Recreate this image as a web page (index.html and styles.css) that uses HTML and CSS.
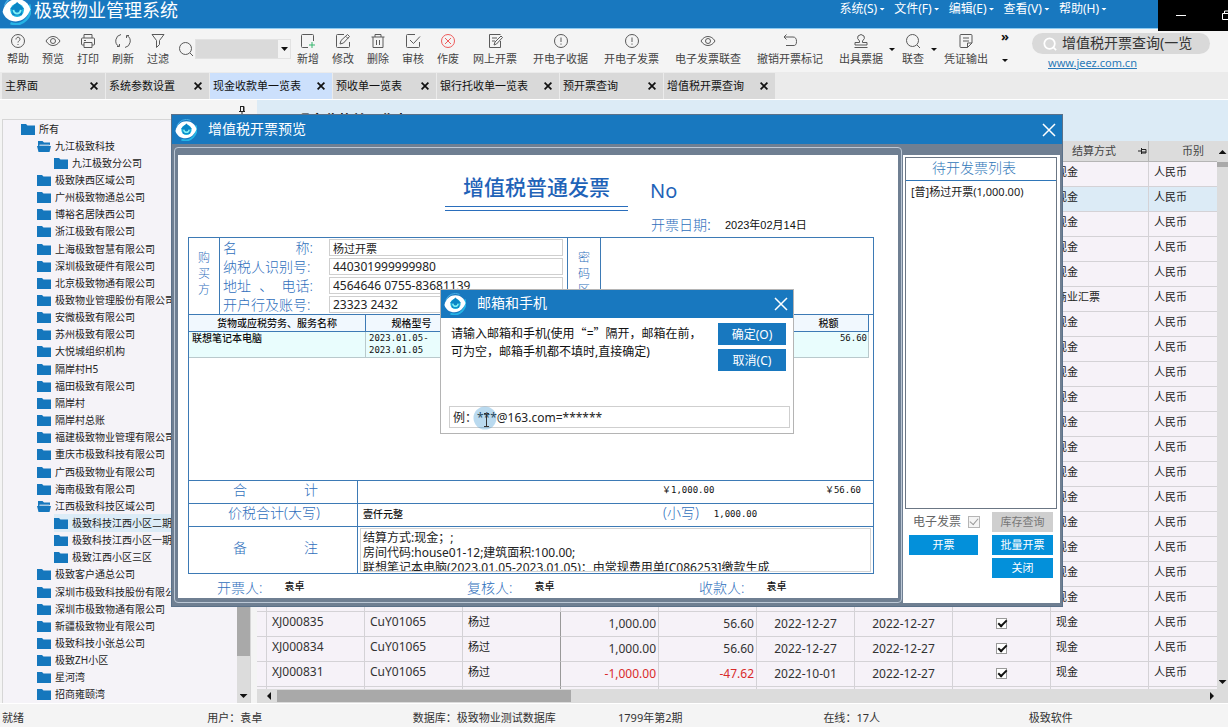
FILE: index.html
```html
<!DOCTYPE html>
<html lang="zh-CN">
<head>
<meta charset="utf-8">
<title>极致物业管理系统</title>
<link rel="stylesheet" href="styles.css">
</head>
<body>
<svg class="defs" aria-hidden="true">
  <symbol id="logo" viewBox="0 0 24 24">
    <path d="M2 8A11 11 0 0 1 17 1.500" fill="none" stroke="#4fb6ea" stroke-width="1"/>
    <path d="M22.500 7A12 12 0 0 1 7 22.500" fill="none" stroke="#25b4e6" stroke-width="2"/>
    <path d="M.5 13C2 6 7 2.500 12.500 2.500c5.500 0 9.500 3.500 11 8.500-2 6-6.500 10-12 10C6 21 2 18 .5 13z" fill="#fff"/>
    <circle cx="12.500" cy="11.800" r="5.600" fill="#19b2de"/>
    <path d="M12.500 5L18.500 11h-2v5h-8v-5h-2z" fill="#0b86c6"/>
    <path d="M9.500 11.500c.5 4 5.500 4 6 0" fill="none" stroke="#7ff0f5" stroke-width="1.500"/>
  </symbol>
  <symbol id="folder" viewBox="0 0 14 12"><path d="M0 1h5l1.500 1.500H14V12H0z" fill="#1577bd"/></symbol>
  <symbol id="folder-open" viewBox="0 0 14 12"><path d="M1 1h4.500L7 2.500h6V5H3L1 10z" fill="#1577bd"/><path d="M2.500 4.500h10V6h-10z" fill="#a9cbe4"/><path d="M0 6h14l-1.500 6H1.500z" fill="#1577bd"/></symbol>
  <symbol id="eye" viewBox="0 0 16 16"><path d="M1 8c3.500-6 10.500-6 14 0-3.500 6-10.500 6-14 0z"/><circle cx="8" cy="8" r="2.500"/></symbol>
  <symbol id="alert" viewBox="0 0 16 16"><circle cx="8" cy="8" r="6.500"/><path d="M8 4.500v4.500M8 10.500v1.200"/></symbol>
  <symbol id="lens" viewBox="0 0 16 16"><circle cx="7.500" cy="7.500" r="6"/><path d="M12 12l3 3"/></symbol>
  <symbol id="x" viewBox="0 0 14 14"><path d="M1 1l12 12M13 1L1 13"/></symbol>
</svg>

<header class="titlebar">
  <svg class="app-logo"><use href="#logo"/></svg>
  <h1>极致物业管理系统</h1>
  <nav class="menu">
    <button>系统(S)</button><button>文件(F)</button><button>编辑(E)</button><button>查看(V)</button><button>帮助(H)</button>
  </nav>
  <div class="win-controls">
    <svg viewBox="0 0 70 30"><path d="M18 15.500h10M64.500 13.500h12v6h-12zM66.500 13v-2h10" fill="none" stroke="#fff"/></svg>
  </div>
</header>

<div class="toolbar">
  <div class="group">
    <button><svg viewBox="0 0 16 16"><circle cx="8" cy="8" r="6.500"/><path d="M6 6.500c0-3 4-3 4-.3C10 7.800 8 8 8 9.500M8 11v1"/></svg>帮助</button>
    <button><svg><use href="#eye"/></svg>预览</button>
    <button><svg viewBox="0 0 16 16"><path d="M4 5V1.500h8V5M4 12H2.500Q1.500 12 1.500 11V6q0-1 1-1h11q1 0 1 1v5q0 1-1 1H12M4 9.500h8v5H4zM4 7.500h2"/></svg>打印</button>
    <button><svg viewBox="0 0 16 16"><path d="M6 1.500A6.500 6.500 0 0 0 4 13.500M2 13.500h2.500V11M10 14.500A6.500 6.500 0 0 0 12 2.500M14 2.500h-2.500V5"/></svg>刷新</button>
    <button><svg viewBox="0 0 16 16"><path d="M2 1.500h12L9.500 7.500v4l-3 3v-7z"/></svg>过滤</button>
  </div>
  <svg class="find"><use href="#lens"/></svg>
  <div class="combo"><select aria-label="查找"><option></option></select></div>
  <div class="group">
    <button><svg viewBox="0 0 16 16"><path d="M8 14.500H2.500q-1 0-1-1v-11q0-1 1-1h10q1 0 1 1V8"/><path d="M12 9v6M9 12h6" stroke="#35b56c"/></svg>新增</button>
    <button><svg viewBox="0 0 16 16"><path d="M9 1.500H2.500q-1 0-1 1v11q0 1 1 1h11q1 0 1-1V9M5 11l1-3.500L12.500 1.500l2 2L8.500 10zM11 3.500l2 2"/></svg>修改</button>
    <button><svg viewBox="0 0 16 16"><path d="M1.500 4h13M5 4V1.500h6V4M3 4v10.500h10V4M6.500 7v5M9.500 7v5"/></svg>删除</button>
    <button><svg viewBox="0 0 16 16"><path d="M10 1.500H2.500q-1 0-1 1v11q0 1 1 1h11q1 0 1-1V9M5 7l3.500 3.500L15 3.500"/></svg>审核</button>
    <button class="danger"><svg viewBox="0 0 16 16"><circle cx="8" cy="8" r="6.500"/><path d="M5 5l6 6M11 5l-6 6"/></svg>作废</button>
  </div>
  <div class="group wide">
    <button><svg viewBox="0 0 16 16"><path d="M13.500 8v6.500H2.500v-13h11M5 5h5M5 8h3M7 12l1-3 6-6 1.500 1.500L9.500 11z"/></svg>网上开票</button>
    <button><svg><use href="#alert"/></svg>开电子收据</button>
    <button><svg><use href="#alert"/></svg>开电子发票</button>
    <button><svg><use href="#eye"/></svg>电子发票联查</button>
    <button><svg viewBox="0 0 16 16"><path d="M4.500 1.500L2 4l2.500 2.500M2 4h9q3.500 0 3.500 4.500T11 12.500H4"/></svg>撤销开票标记</button>
    <button><svg viewBox="0 0 16 16"><path d="M6.500 8Q3.500 5.500 5 3q3-3 6 0 1.500 2.500-1.500 5v1.500h4.500v2.500H2V9.500h4.500zM1.500 14.500h13"/></svg>出具票据</button>
  </div>
  <div class="group split">
    <i class="caret"></i>
    <button><svg><use href="#lens"/></svg>联查</button>
    <i class="caret"></i>
    <button><svg viewBox="0 0 16 16"><path d="M9.500 14.500H3q-1 0-1-1v-11q0-1 1-1h10q1 0 1 1V10zM9.500 14.500V10H14M5 5h6M5 8h6"/></svg>凭证输出</button>
  </div>
  <div class="overflow"><b>»</b><i class="caret"></i></div>
  <div class="query">
    <div class="pill"><svg><use href="#lens"/></svg><span>增值税开票查询(一览</span></div>
    <a href="#">www.jeez.com.cn</a>
  </div>
</div>

<nav class="tabs">
  <div class="tab"><button>主界面</button><button class="close" aria-label="关闭"><svg><use href="#x"/></svg></button></div>
  <div class="tab"><button>系统参数设置</button><button class="close" aria-label="关闭"><svg><use href="#x"/></svg></button></div>
  <div class="tab active"><button>现金收款单一览表</button><button class="close" aria-label="关闭"><svg><use href="#x"/></svg></button></div>
  <div class="tab"><button>预收单一览表</button><button class="close" aria-label="关闭"><svg><use href="#x"/></svg></button></div>
  <div class="tab"><button>银行托收单一览表</button><button class="close" aria-label="关闭"><svg><use href="#x"/></svg></button></div>
  <div class="tab"><button>预开票查询</button><button class="close" aria-label="关闭"><svg><use href="#x"/></svg></button></div>
  <div class="tab"><button>增值税开票查询</button><button class="close" aria-label="关闭"><svg><use href="#x"/></svg></button></div>
</nav>

<main class="main">
  <aside class="sidebar">
    <div class="side-head"><svg viewBox="0 0 8 12"><path d="M2 1.500h4V6M2.500 1v5M1 6.500h6M4 7v4M5.500 1v5" fill="none" stroke="#222"/></svg></div>
    <div class="side-body">
      <ul class="tree">
        <li><svg><use href="#folder"/></svg>所有</li>
        <li class="l1"><svg><use href="#folder-open"/></svg>九江极致科技</li>
        <li class="l2"><svg><use href="#folder"/></svg>九江极致分公司</li>
        <li class="l1"><svg><use href="#folder"/></svg>极致陕西区域公司</li>
        <li class="l1"><svg><use href="#folder"/></svg>广州极致物通总公司</li>
        <li class="l1"><svg><use href="#folder"/></svg>博裕名居陕西公司</li>
        <li class="l1"><svg><use href="#folder"/></svg>浙江极致有限公司</li>
        <li class="l1"><svg><use href="#folder"/></svg>上海极致智慧有限公司</li>
        <li class="l1"><svg><use href="#folder"/></svg>深圳极致硬件有限公司</li>
        <li class="l1"><svg><use href="#folder"/></svg>北京极致物通有限公司</li>
        <li class="l1"><svg><use href="#folder"/></svg>极致物业管理股份有限公司</li>
        <li class="l1"><svg><use href="#folder"/></svg>安微极致有限公司</li>
        <li class="l1"><svg><use href="#folder"/></svg>苏州极致有限公司</li>
        <li class="l1"><svg><use href="#folder"/></svg>大悦城组织机构</li>
        <li class="l1"><svg><use href="#folder"/></svg>隔岸村H5</li>
        <li class="l1"><svg><use href="#folder"/></svg>福田极致有限公司</li>
        <li class="l1"><svg><use href="#folder"/></svg>隔岸村</li>
        <li class="l1"><svg><use href="#folder"/></svg>隔岸村总账</li>
        <li class="l1"><svg><use href="#folder"/></svg>福建极致物业管理有限公司</li>
        <li class="l1"><svg><use href="#folder"/></svg>重庆市极致科技有限公司</li>
        <li class="l1"><svg><use href="#folder"/></svg>广西极致物业有限公司</li>
        <li class="l1"><svg><use href="#folder"/></svg>海南极致有限公司</li>
        <li class="l1"><svg><use href="#folder-open"/></svg>江西极致科技区域公司</li>
        <li class="l2 selected"><svg><use href="#folder"/></svg>极致科技江西小区二期</li>
        <li class="l2"><svg><use href="#folder"/></svg>极致科技江西小区一期</li>
        <li class="l2"><svg><use href="#folder"/></svg>极致江西小区三区</li>
        <li class="l1"><svg><use href="#folder"/></svg>极致客户通总公司</li>
        <li class="l1"><svg><use href="#folder"/></svg>深圳市极致科技股份有限公司</li>
        <li class="l1"><svg><use href="#folder"/></svg>深圳市极致物通有限公司</li>
        <li class="l1"><svg><use href="#folder"/></svg>新疆极致物业有限公司</li>
        <li class="l1"><svg><use href="#folder"/></svg>极致科技小张总公司</li>
        <li class="l1"><svg><use href="#folder"/></svg>极致ZH小区</li>
        <li class="l1"><svg><use href="#folder"/></svg>星河湾</li>
        <li class="l1"><svg><use href="#folder"/></svg>招商雍颐湾</li>
      </ul>
      <div class="vscroll"><i class="thumb"></i><i class="caret"></i></div>
    </div>
  </aside>

  <section class="list">
    <h2>现金收款单一览表</h2>
    <div class="grid-wrap">
      <div class="grid-clip">
        <table class="grid">
          <colgroup><col class="c-mark"><col><col><col><col><col><col><col><col><col><col class="c-last"></colgroup>
          <thead><tr><th></th><th></th><th></th><th></th><th></th><th></th><th></th><th></th><th></th><th><div class="th-pin">结算方式<svg viewBox="0 0 9 8"><path d="M0 4h3.500M3.500 1v6M3.500 2.500H8v3.500H3.500M3.500 5H8" fill="none" stroke="#222"/></svg></div></th><th class="cur">币别</th></tr></thead>
          <tbody>
            <tr><td><td><td><td><td><td><td><td><td><td>现金<td>人民币</tr>
            <tr class="selected"><td><td><td><td><td><td><td><td><td><td>现金<td>人民币</tr>
            <tr><td><td><td><td><td><td><td><td><td><td>现金<td>人民币</tr>
            <tr><td><td><td><td><td><td><td><td><td><td>现金<td>人民币</tr>
            <tr><td><td><td><td><td><td><td><td><td><td>现金<td>人民币</tr>
            <tr><td><td><td><td><td><td><td><td><td><td>商业汇票<td>人民币</tr>
            <tr><td><td><td><td><td><td><td><td><td><td>现金<td>人民币</tr>
            <tr><td><td><td><td><td><td><td><td><td><td>现金<td>人民币</tr>
            <tr><td><td><td><td><td><td><td><td><td><td>现金<td>人民币</tr>
            <tr><td><td><td><td><td><td><td><td><td><td>现金<td>人民币</tr>
            <tr><td><td><td><td><td><td><td><td><td><td>现金<td>人民币</tr>
            <tr><td><td><td><td><td><td><td><td><td><td>现金<td>人民币</tr>
            <tr><td><td><td><td><td><td><td><td><td><td>现金<td>人民币</tr>
            <tr><td><td><td><td><td><td><td><td><td><td>现金<td>人民币</tr>
            <tr><td><td><td><td><td><td><td><td><td><td>现金<td>人民币</tr>
            <tr><td><td><td><td><td><td><td><td><td><td>现金<td>人民币</tr>
            <tr><td><td><td><td><td><td><td><td><td><td>现金<td>人民币</tr>
            <tr><td><td><td><td><td><td><td><td><td><td>现金<td>人民币</tr>
            <tr><td><td class="code">XJ000835<td class="code">CuY01065<td class="edge">杨过<td class="num">1,000.00<td class="num">56.60<td class="date">2022-12-27<td class="date">2022-12-27<td class="tick"><input type="checkbox" checked aria-label="已审核"><td>现金<td>人民币</tr>
            <tr><td><td class="code">XJ000834<td class="code">CuY01065<td class="edge">杨过<td class="num">1,000.00<td class="num">56.60<td class="date">2022-12-27<td class="date">2022-12-27<td class="tick"><input type="checkbox" checked aria-label="已审核"><td>现金<td>人民币</tr>
            <tr><td><td class="code">XJ000831<td class="code">CuY01065<td class="edge">杨过<td class="num neg">-1,000.00<td class="num neg">-47.62<td class="date">2022-10-01<td class="date">2022-12-27<td class="tick"><input type="checkbox" checked aria-label="已审核"><td>现金<td>人民币</tr>
            <tr><td><td><td><td class="edge"><td><td><td><td><td><td><td></tr>
          </tbody>
        </table>
      </div>
      <div class="vscroll right"><i class="caret up"></i><i class="thumb"></i><i class="caret"></i></div>
    </div>
    <div class="hscroll"><i class="caret left"></i><i class="thumb"></i><i class="caret right"></i></div>
  </section>
</main>

<footer class="status"><span>就绪</span><span>用户<span class="fw">：</span>袁卓</span><span>数据库<span class="fw">：</span>极致物业测试数据库</span><span>1799年第2期</span><span>在线<span class="fw">：</span>17人</span><span>极致软件</span></footer>

<section class="window preview" role="dialog" aria-label="增值税开票预览">
  <header><svg class="logo"><use href="#logo"/></svg><h3>增值税开票预览</h3><button aria-label="关闭"><svg><use href="#x"/></svg></button></header>
  <div class="preview-body">
    <div class="frame">
      <div class="paper">
        <div class="inv-head">
          <div class="inv-title"><h4>增值税普通发票</h4><i></i></div>
          <span class="no">No</span>
        </div>
        <div class="inv-date"><span class="lbl">开票日期:</span><span>2023年02月14日</span></div>
        <div class="inv">
          <div class="buyer">
            <div class="side">购<br>买<br>方</div>
            <div class="fields">
              <label for="f1"><span>名</span><span>称:</span></label><input id="f1" class="zh" value="杨过开票">
              <label for="f2"><span>纳税人识别号:</span></label><input id="f2" value="440301999999980">
              <label for="f3"><span>地址</span><span>、</span><span>电话:</span></label><input id="f3" value="4564646 0755-83681139">
              <label for="f4"><span>开户行及账号:</span></label><input id="f4" value="23323 2432">
            </div>
            <div class="side secret">密<br>码<br>区</div>
          </div>
          <div class="items-wrap">
            <table class="items">
              <colgroup><col class="i-name"><col class="i-spec"><col><col class="i-tax"></colgroup>
              <thead><tr><th>货物或应税劳务、服务名称</th><th>规格型号</th><th></th><th>税额</th></tr></thead>
              <tbody><tr><td><b>联想笔记本电脑</b></td><td class="mono">2023.01.05-<br>2023.01.05</td><td></td><td class="mono tax">56.60</td></tr></tbody>
            </table>
          </div>
          <div class="row"><div class="cap"><span>合</span><span>计</span></div><div class="val sums"><span class="mono">￥1,000.00</span><span class="mono">￥56.60</span></div></div>
          <div class="row"><div class="cap one">价税合计(大写)</div><div class="val"><b class="big">壹仟元整</b><span class="lbl">(小写)</span><span class="mono">1,000.00</span></div></div>
          <div class="row memo"><div class="cap"><span>备</span><span>注</span></div><textarea aria-label="备注" rows="3">结算方式:现金；;
房间代码:house01-12;建筑面积:100.00;
联想笔记本电脑(2023.01.05-2023.01.05)：由常规费用单[C086253]缴款生成</textarea></div>
        </div>
        <div class="signs">
          <div><span class="lbl">开票人:</span><b>袁卓</b></div>
          <div><span class="lbl">复核人:</span><b>袁卓</b></div>
          <div><span class="lbl">收款人:</span><b>袁卓</b></div>
        </div>
      </div>
    </div>
    <aside class="pending">
      <div class="pending-list"><h4>待开发票列表</h4><p>[普]杨过开票(1,000.00)</p></div>
      <div class="actions">
        <label>电子发票<input type="checkbox" checked disabled></label>
        <button disabled>库存查询</button>
        <button>开票</button>
        <button>批量开票</button>
        <button class="last">关闭</button>
      </div>
    </aside>
  </div>
</section>

<section class="window prompt" role="dialog" aria-label="邮箱和手机">
  <header><svg class="logo"><use href="#logo"/></svg><h3>邮箱和手机</h3><button aria-label="关闭"><svg><use href="#x"/></svg></button></header>
  <div class="prompt-body">
    <label for="contact">请输入邮箱和手机(使用<q>“</q>=<q>”</q>隔开<span class="fw">，</span>邮箱在前<span class="fw">，</span><br>可为空<span class="fw">，</span>邮箱手机都不填时,直接确定)</label>
    <div class="buttons"><button>确定(O)</button><button>取消(C)</button></div>
  </div>
  <input id="contact" value="例：***@163.com=******">
  <svg class="pointer" viewBox="0 0 24 24"><circle cx="12" cy="12" r="11.500" fill="#3a94d0" fill-opacity=".35"/><path d="M11 7.500h2.500M16 7.500h-2M13.500 8v12M11 20.500h5" fill="none" stroke="#333"/></svg>
</section>
</body>
</html>
```

FILE: styles.css
```css
* { box-sizing: border-box; }
html, body { height: 100%; }
body {
  margin: 0;
  display: flex;
  flex-direction: column;
  overflow: hidden;
  position: relative;
  background: #f4f4f4;
  color: #222;
  font-family: "Noto Sans", "Noto Sans CJK SC", sans-serif;
  font-size: 11px;
  line-height: 14px;
}
h1, h2, h3, h4, p, ul { margin: 0; padding: 0; font-weight: 400; }
button, input, select, textarea { font: inherit; color: inherit; margin: 0; }
button { border: 0; padding: 0; background: none; white-space: nowrap; }
.defs { position: absolute; width: 0; height: 0; }
/* full-width punctuation centred in its cell */
.fw { font-family: "Noto Sans CJK TC", sans-serif; }

.caret { width: 6px; height: 3px; background: #111; clip-path: polygon(0 0, 100% 0, 50% 100%); flex: none; }
.caret.up { width: 8px; height: 4px; clip-path: polygon(0 100%, 100% 100%, 50% 0); }
.caret.left { width: 4px; height: 8px; clip-path: polygon(100% 0, 100% 100%, 0 50%); }
.caret.right { width: 4px; height: 8px; clip-path: polygon(0 0, 0 100%, 100% 50%); }

/* title bar */
.titlebar {
  flex: none;
  height: 29px;
  display: flex;
  align-items: center;
  padding: 0 121px 8px 2px;
  background: #1878bf;
  border-bottom: 1px solid #8ccbf2;
  color: #fff;
  position: relative;
}
.app-logo { width: 29px; height: 29px; flex: none; margin-right: 3px; }
.titlebar h1 { font-size: 18px; line-height: 20px; white-space: nowrap; }
.menu { margin-left: auto; display: flex; gap: 9px; padding-bottom: 2px; font-size: 12px; }
.menu button { display: flex; align-items: center; gap: 2px; }
.menu button::after { content: ""; width: 6px; height: 3px; background: #fff; clip-path: polygon(0 0, 100% 0, 50% 100%); }
.win-controls { position: absolute; top: 0; right: 0; width: 70px; height: 31px; background: #000; z-index: 1; }
.win-controls svg { display: block; width: 70px; height: 30px; }

/* toolbar */
.toolbar {
  flex: none;
  height: 43px;
  display: flex;
  align-items: flex-start;
  padding: 4px 18px 0 7px;
  color: #444;
}
.toolbar svg { fill: none; stroke: #5a5a5a; }
.group { display: flex; gap: 13px; }
.group button { display: flex; flex-direction: column; align-items: center; gap: 3px; }
.group svg { width: 16px; height: 16px; }
.group .danger svg { stroke: #ee5a5a; }
.group.wide { gap: 16px; margin-left: 14px; }
.group.split { gap: 7px; margin-left: 6px; }
.split .caret { margin-top: 15px; }
.find { width: 16px; height: 16px; margin: 8px 1px 0 9px; flex: none; }
.combo { position: relative; width: 96px; margin: 6px 6px 0 0; }
.combo select { appearance: none; display: block; width: 100%; height: 20px; border: 1px solid #e2e2e2; border-radius: 0; background: #dadada; }
.combo::after { content: ""; position: absolute; top: 1px; right: 1px; width: 12px; height: 18px; background: #f3f3f3; }
.combo::before { content: ""; position: absolute; z-index: 1; top: 8px; right: 3px; width: 7px; height: 4px; background: #111; clip-path: polygon(0 0, 100% 0, 50% 100%); }
.overflow { display: flex; flex-direction: column; align-items: center; gap: 20px; margin-left: 13px; color: #111; }
.overflow b { font-size: 13px; line-height: 6px; }
.query { margin-left: auto; width: 178px; }
.pill { display: flex; align-items: center; gap: 5px; height: 21px; padding-left: 11px; border-radius: 11px; background: #d9d9d9; font-size: 14px; color: #333; white-space: nowrap; }
.pill svg { width: 14px; height: 14px; stroke: #fff; stroke-width: 2; }
.pill span { padding-bottom: 2px; }
.query a { display: block; margin: 1px 0 0 16px; color: #2a7ab8; line-height: 16px; }

/* document tabs */
.tabs { flex: none; height: 28px; display: flex; gap: 1px; padding: 1px 0 0 2px; background: #ebebeb; border-bottom: 1px solid #fff; }
.tab { display: flex; align-items: center; justify-content: space-between; gap: 16px; min-width: 103px; padding: 0 7px 0 3px; background: #d9d9d9; color: #111; }
.tab.active { background: #cce0fc; }
.tab .close { display: flex; }
.tab svg { width: 8px; height: 8px; fill: none; stroke: #111; stroke-width: 3; }

/* organisation tree */
.main { flex: 1; min-height: 0; display: flex; gap: 6px; }
.sidebar { flex: none; width: 251px; padding-left: 2px; display: flex; flex-direction: column; }
.side-head { flex: none; height: 19px; padding: 5px 5px 0 0; text-align: right; }
.side-head svg { width: 8px; height: 12px; }
.side-body { flex: 1; min-height: 0; display: flex; border: 1px solid #d6d6d6; border-bottom: 0; background: #f5f3f8; }
.tree { flex: 1; display: grid; grid-auto-rows: minmax(0, 1fr); list-style: none; font-size: 10px; white-space: nowrap; overflow: hidden; }
.tree li { display: flex; align-items: center; gap: 4px; margin-left: 18px; }
.tree .l1 { margin-left: 34px; }
.tree .l2 { margin-left: 51px; }
.tree .selected { background: #dcecf7; }
.tree svg { width: 14px; height: 12px; flex: none; }
.vscroll { flex: none; width: 13px; display: flex; flex-direction: column; align-items: center; background: #dcdcdc; padding-bottom: 5px; }
.vscroll .thumb { width: 100%; height: 160px; margin-top: auto; background: #a9a9a9; }
.vscroll .caret { width: 8px; height: 4px; margin-top: 38px; }

/* receipts list */
.list { flex: 1; min-width: 0; display: flex; flex-direction: column; background: #dcebf6; }
.list h2 { flex: none; height: 41px; padding: 12px 0 0 39px; font-size: 14px; line-height: 16px; font-weight: 700; color: #111; }
.grid-wrap { flex: 1; min-height: 0; display: flex; }
.grid-clip { flex: 1; min-width: 0; overflow: hidden; background: #f6f2f8; }
.grid { width: 100%; table-layout: fixed; border-collapse: separate; border-spacing: 0; }
.c-mark { width: 10px; }
.c-last { width: 68px; }
.grid th { height: 21px; padding: 0; background: #dcdcdc; border-right: 1px solid #b5b5b5; border-bottom: 1px solid #b5b5b5; font-weight: 400; color: #444; }
.th-pin { display: flex; align-items: center; justify-content: space-between; padding: 0 1px 0 21px; }
.th-pin svg { width: 9px; height: 8px; }
.grid .cur { text-align: right; padding-right: 13px; border-right: 0; }
.grid td { height: 25px; padding: 3px 5px; line-height: 14px; border-right: 1px solid #d4d2d6; border-bottom: 1px solid #d4d2d6; vertical-align: top; }
.grid td:last-child { border-right: 0; }
.grid td.code { font-size: 12px; color: #333; }
.grid td.edge { border-right: 1px solid #999; }
.grid td.num, .grid td.date { padding: 5px 2px; font-size: 12px; text-align: right; color: #333; }
.grid td.date { text-align: center; }
.grid td.neg { color: #d92b2b; }
.grid .selected td { background: #dcebf6; }
.tick input { appearance: none; display: block; width: 9px; height: 9px; margin: 4px auto 0; outline: 1px solid #999; background: #fff; }
.tick input::after { content: ""; display: block; width: 7px; height: 3px; margin: 1px; border: solid #111; border-width: 0 0 2px 2px; rotate: -45deg; }
.vscroll.right { width: 11px; padding-top: 9px; }
.vscroll.right .thumb { height: 5px; margin-top: 8px; }
.vscroll.right .up { margin-top: 0; }
.vscroll.right .caret:last-child { margin-top: auto; }
.hscroll { flex: none; height: 14px; display: flex; align-items: center; background: #dcdcdc; padding: 0 14px 0 10px; }
.hscroll .thumb { width: 31%; height: 12px; margin-left: 6px; background: #a9a9a9; }
.hscroll .right { margin-left: auto; }

.status { flex: none; height: 24px; display: grid; grid-template-columns: repeat(5, 16.75%) 1fr; align-items: center; padding: 4px 0 0 2px; color: #333; border-top: 1px solid #fff; }

/* floating windows */
.window { position: absolute; display: flex; flex-direction: column; }
.window header { flex: none; display: flex; align-items: center; padding: 0 6px 0 3px; background: #1878bf; color: #fff; }
.window .logo { width: 22px; height: 22px; margin-right: 11px; }
.window h3 { padding-bottom: 2px; font-size: 14px; line-height: 20px; }
.window header button { margin-left: auto; display: flex; }
.window header button svg { width: 14px; height: 14px; fill: none; stroke: #fff; stroke-width: 1.500; }

.preview { left: 171px; top: 114px; width: 892px; height: 493px; border: 1px solid #5b7189; }
.preview header { height: 29px; }
.preview-body { flex: 1; min-height: 0; display: flex; gap: 1px; padding: 3px 2px 3px; background: #6f7f92; }
.frame { flex: none; width: 728px; display: flex; padding: 7px 3px 4px; border: 1px solid #bcc8d6; border-radius: 4px; }
.paper { flex: 1; padding: 0 24px 0 10px; background: #fff; }
.lbl, .cap, .side, .fields label { color: #2f6fbc; font-size: 14px; font-weight: 300; }
.mono { font-family: "DejaVu Sans Mono", "Noto Sans CJK SC", monospace; font-size: 9px; line-height: 12px; color: #111; }
.inv-head { display: flex; align-items: flex-start; gap: 22px; padding: 19px 0 0 257px; color: #1f63b8; }
.inv-title { width: 183px; text-align: center; }
.inv-title h4 { font-size: 21px; line-height: 26px; padding-bottom: 6px; font-weight: 500; }
.inv-title i { display: block; height: 5px; border: solid #2a6ebc; border-width: 1px 0; }
.no { font-size: 20px; line-height: 34px; }
.inv-date { display: flex; align-items: center; gap: 14px; padding-left: 463px; height: 26px; padding-top: 2px; font-family: "Liberation Sans", "Noto Sans CJK SC", sans-serif; color: #111; }
.inv { border: 1px solid #3d7ab5; }
.buyer { display: flex; border-bottom: 1px solid #3d7ab5; }
.side { width: 31px; display: flex; align-items: center; justify-content: center; padding-bottom: 4px; font-size: 12px; line-height: 16px; border-right: 1px solid #3d7ab5; }
.fields { display: grid; grid-template-columns: 90px 234px; column-gap: 16px; row-gap: 2px; padding: 1px 4px 1px 3px; }
.fields label { display: flex; justify-content: space-between; line-height: 17px; white-space: nowrap; }
.fields input { min-width: 0; height: 17px; padding: 0 3px; border: 1px solid #cfcfcf; border-radius: 0; background: #fff; font-size: 12px; color: #222; }
.fields .zh { font-size: 11px; }
.secret { width: 34px; border-left: 1px solid #3d7ab5; }
.items-wrap { height: 165px; }
.items { width: 680px; table-layout: fixed; border-collapse: separate; border-spacing: 0; font-size: 10px; color: #111; }
.i-name { width: 177px; }
.i-spec { width: 92px; }
.i-tax { width: 80px; }
.items th { height: 17px; padding: 0; line-height: 14px; background: #f1f8fe; border-right: 1px solid #3d7ab5; border-bottom: 1px solid #3d7ab5; font-weight: 500; }
.items td { height: 26px; padding: 0 3px; line-height: 12px; background: #e9fdfd; border-right: 1px solid #b9c9cc; border-bottom: 1px solid #b9c9cc; vertical-align: top; }
.items b, .big, .signs b { font-size: 10px; font-weight: 500; color: #111; }
.items .tax { text-align: right; padding: 0 1px; }
.row { display: flex; height: 23px; border-top: 1px solid #3d7ab5; }
.cap { flex: none; width: 169px; display: flex; align-items: center; justify-content: space-between; padding: 0 39px 4px 44px; border-right: 1px solid #3d7ab5; white-space: nowrap; }
.cap.one { padding: 0 0 4px 39px; }
.val { flex: 1; display: flex; align-items: center; padding: 0 12px 2px 5px; }
.sums { justify-content: space-between; padding: 0 12px 4px 304px; }
.val .lbl { margin: 0 15px 0 260px; padding-bottom: 2px; }
.row.memo { height: 47px; }
.memo textarea { flex: 1; height: 44px; margin: 1px 2px 0; padding: 1px 2px 0; border: 1px solid #d4d4d4; resize: none; overflow: hidden; font-size: 12px; line-height: 15px; color: #222; }
.signs { display: grid; grid-template-columns: 250px 232px 1fr; padding: 5px 0 0 29px; }
.signs div { display: flex; gap: 22px; align-items: flex-start; }
.signs .lbl { line-height: 18px; }

.pending { flex: 1; margin-top: 8px; padding: 2px 3px 0 2px; background: #fff; }
.pending-list { height: 352px; border: 1px solid #6b7684; }
.pending-list h4 { height: 23px; padding-right: 14px; border-bottom: 1px solid #2f76b8; text-align: center; font-size: 14px; line-height: 19px; font-weight: 300; color: #2f76b8; }
.pending-list p { padding: 4px 5px; color: #222; }
.actions { display: grid; grid-template-columns: 69px 61px; gap: 3px 14px; padding: 3px 4px; }
.actions label { display: flex; align-items: center; gap: 7px; padding-left: 4px; font-size: 12px; color: #666; white-space: nowrap; }
.actions input { appearance: none; width: 12px; height: 12px; border: 1px solid #b5b5b5; background: #f4f4f4; }
.actions input::after { content: ""; display: block; width: 7px; height: 4px; margin: 1px; border: solid #999; border-width: 0 0 1px 1px; rotate: -50deg; }
.actions button { height: 20px; background: #0390da; color: #fff; }
.actions button:disabled { background: #cfcfcf; color: #777; }
.actions .last { grid-column: 2; }

.prompt { left: 440px; top: 289px; width: 354px; height: 145px; border: 1px solid #b4b4b4; background: #fff; font-size: 12px; line-height: 17px; }
.prompt header { height: 28px; padding-right: 5px; }
.prompt-body { flex: 1; display: flex; justify-content: space-between; padding: 5px 7px 0 10px; }
.prompt label { padding-top: 1px; white-space: nowrap; color: #111; }
.prompt q { quotes: none; font-family: "Noto Sans CJK SC", sans-serif; }
.buttons { display: flex; flex-direction: column; gap: 4px; }
.buttons button { width: 68px; height: 22px; background: #1878bf; color: #fff; }
.prompt > input { height: 22px; margin: 0 3px 5px 8px; padding: 0 3px; border: 1px solid #cfcfcf; border-radius: 0; font-family: "Noto Sans", "Noto Sans CJK TC", sans-serif; color: #222; }
.pointer { position: absolute; left: 32px; top: 116px; width: 24px; height: 24px; }
```
